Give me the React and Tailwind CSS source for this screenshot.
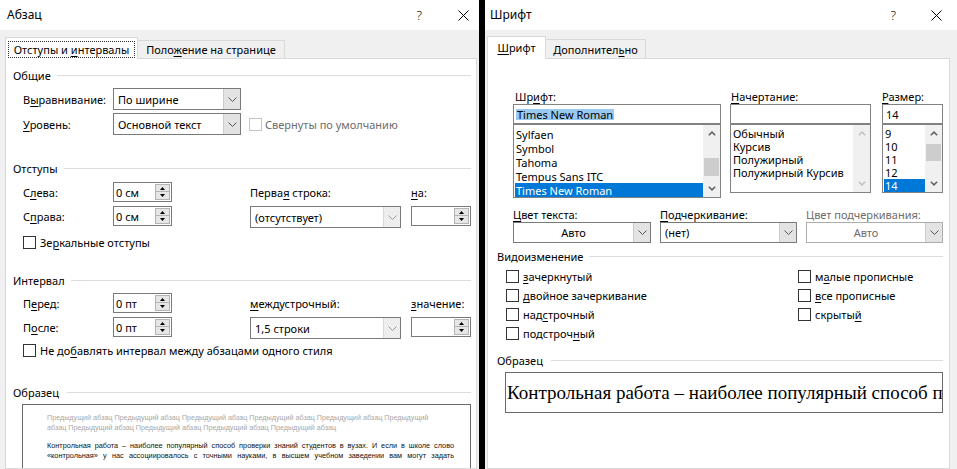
import React from "react";

const U = ({ children }) => (
  <span className="underline underline-offset-[2px] decoration-[1px]">{children}</span>
);

const CloseX = () => (
  <svg width="11" height="11" viewBox="0 0 11 11">
    <path d="M0.5 0.5L10.5 10.5M10.5 0.5L0.5 10.5" stroke="#000" strokeWidth="1" fill="none" />
  </svg>
);

const ChevDown = ({ color = "#5a5a5a" }) => (
  <svg width="9" height="5" viewBox="0 0 9 5">
    <path d="M0.5 0.5L4.5 4.5L8.5 0.5" fill="none" stroke={color} strokeWidth="1" />
  </svg>
);

const ScrollUp = ({ color = "#606060" }) => (
  <svg width="8" height="5" viewBox="0 0 8 5">
    <path d="M0.8 4.3L4 1.1L7.2 4.3" fill="none" stroke={color} strokeWidth="1.5" />
  </svg>
);

const ScrollDown = ({ color = "#606060" }) => (
  <svg width="8" height="5" viewBox="0 0 8 5">
    <path d="M0.8 0.7L4 3.9L7.2 0.7" fill="none" stroke={color} strokeWidth="1.5" />
  </svg>
);

function Box({ disabled }) {
  return (
    <div
      className={`w-[13px] h-[13px] shrink-0 border bg-white ${
        disabled ? "border-[#c4c4c4]" : "border-[#333333]"
      }`}
    />
  );
}

function Spin({ value, className = "" }) {
  return (
    <div className={`flex h-[20px] border border-[#7a7a7a] bg-white ${className}`}>
      <div className="flex-1 flex items-center pl-[2px]">
        <span>{value}</span>
      </div>
      <div className="w-[16px] flex flex-col py-px pr-px">
        <div className="h-[9px] bg-[#e6e6e6] border border-[#b4b4b4] flex items-center justify-center">
          <svg width="5" height="3" viewBox="0 0 5 3">
            <path d="M0 3L2.5 0L5 3Z" fill="#000" />
          </svg>
        </div>
        <div className="h-[9px] bg-[#e6e6e6] border border-[#b4b4b4] border-t-0 flex items-center justify-center">
          <svg width="5" height="3" viewBox="0 0 5 3">
            <path d="M0 0L2.5 3L5 0Z" fill="#000" />
          </svg>
        </div>
      </div>
    </div>
  );
}

function Select({ value, className = "", center, disabled, light }) {
  return (
    <div
      className={`flex border bg-white ${
        disabled ? "border-[#adadad]" : "border-[#7a7a7a]"
      } ${className}`}
    >
      <div
        className={`flex-1 flex items-center ${center ? "justify-center" : "pl-[4px]"} ${
          disabled ? "text-[#6d6d6d]" : ""
        }`}
      >
        <span>{value}</span>
      </div>
      <div
        className={`w-[17px] flex items-center justify-center border-l ${
          light ? "bg-[#eeeeee] border-[#dadada]" : "bg-[#e3e3e3] border-[#cccccc]"
        }`}
      >
        <ChevDown color={light ? "#9a9a9a" : "#555555"} />
      </div>
    </div>
  );
}

function Group({ label, className = "", gap = "ml-[6px]" }) {
  return (
    <div className={`flex items-center h-[16px] ${className}`}>
      <span>{label}</span>
      <div className={`flex-1 h-px bg-[#dcdcdc] ${gap}`} />
    </div>
  );
}

function TitleBar({ title, pl, qGap, pr }) {
  return (
    <div className={`h-[30px] shrink-0 bg-white flex items-center ${pl}`}>
      <span className="text-[12px]">{title}</span>
      <div className={`ml-auto flex items-center ${pr}`}>
        <span className="text-[13px] font-light">?</span>
        <div className={qGap}>
          <CloseX />
        </div>
      </div>
    </div>
  );
}

function LeftDialog() {
  return (
    <div className="w-[479px] h-[469px] shrink-0 bg-[#f0f0f0] flex flex-col overflow-hidden">
      <TitleBar title="Абзац" pl="pl-[7px]" qGap="ml-[36px]" pr="mr-[10px]" />
      <div className="h-[28px] shrink-0 pl-[5px] flex items-end">
        <div className="relative z-10 -mb-px h-[22px] w-[133px] bg-white border border-b-0 border-[#d9d9d9] px-[2px] pt-[3px] pb-[1px]">
          <div className="h-full border border-dotted border-[#333] flex items-center justify-center">
            <span>
              Отступы и <U>и</U>нтервалы
            </span>
          </div>
        </div>
        <div className="-ml-px h-[18px] w-[148px] border border-b-0 border-[#d9d9d9] bg-[#f0f0f0] flex items-center justify-center">
          <span>
            Поло<U>ж</U>ение на странице
          </span>
        </div>
      </div>
      <div className="ml-[5px] w-[472px] flex-1 bg-white border border-[#d9d9d9] pl-[7px] pr-[5px] overflow-hidden">
        <Group label="Общие" className="mt-[8px]" />
        <div className="ml-[10px] mt-[5px] flex items-center h-[22px]">
          <div className="w-[90px]">
            В<U>ы</U>равнивание:
          </div>
          <Select value="По ширине" className="w-[128px] h-[22px]" />
        </div>
        <div className="ml-[10px] mt-[3px] flex items-center h-[22px]">
          <div className="w-[90px]">
            <U>У</U>ровень:
          </div>
          <Select value="Основной текст" className="w-[128px] h-[22px]" />
          <div className="ml-[8px] flex items-center">
            <Box disabled />
            <span className="ml-[3px] text-[#6d6d6d]">Свернуты по умолчанию</span>
          </div>
        </div>

        <Group label="Отступы" className="mt-[25px]" />
        <div className="ml-[10px] mt-[6px] flex items-center h-[20px]">
          <div className="w-[90px]">
            С<U>л</U>ева:
          </div>
          <Spin value="0 см" className="w-[59px]" />
          <div className="ml-[78px] w-[161px]">
            Перва<U>я</U> строка:
          </div>
          <div>
            <U>н</U>а:
          </div>
        </div>
        <div className="ml-[10px] mt-[4px] flex items-start h-[22px]">
          <div className="w-[90px] h-[20px] flex items-center">
            <span>
              С<U>п</U>рава:
            </span>
          </div>
          <Spin value="0 см" className="w-[59px]" />
          <Select value="(отсутствует)" className="ml-[78px] w-[151px] h-[22px]" light />
          <Spin value="" className="ml-[10px] w-[60px]" />
        </div>
        <div className="ml-[10px] mt-[8px] flex items-center h-[13px]">
          <Box />
          <span className="ml-[4px]">
            Зе<U>р</U>кальные отступы
          </span>
        </div>

        <Group label="Интервал" className="mt-[23px]" />
        <div className="ml-[10px] mt-[5px] flex items-center h-[20px]">
          <div className="w-[90px]">
            П<U>е</U>ред:
          </div>
          <Spin value="0 пт" className="w-[59px]" />
          <div className="ml-[78px] w-[161px]">
            <U>м</U>еждустрочный:
          </div>
          <div>
            <U>з</U>начение:
          </div>
        </div>
        <div className="ml-[10px] mt-[4px] flex items-start h-[22px]">
          <div className="w-[90px] h-[20px] flex items-center">
            <span>
              П<U>о</U>сле:
            </span>
          </div>
          <Spin value="0 пт" className="w-[59px]" />
          <Select value="1,5 строки" className="ml-[78px] w-[151px] h-[22px]" light />
          <Spin value="" className="ml-[10px] w-[60px]" />
        </div>
        <div className="ml-[10px] mt-[5px] flex items-center h-[13px]">
          <Box />
          <span className="ml-[4px]">
            Не до<U>б</U>авлять интервал между абзацами одного стиля
          </span>
        </div>

        <Group label="Образец" className="mt-[27px]" gap="ml-[8px]" />
        <div className="ml-[9px] mt-[4px] w-[449px] h-[80px] border border-[#6a6a6a] bg-white pl-[24px] pr-[16px] pt-[8px] font-['Liberation_Sans',sans-serif]">
          <div className="text-[#a8a8a8] text-[7.2px] leading-[10px] whitespace-nowrap">
            Предыдущий абзац Предыдущий абзац Предыдущий абзац Предыдущий абзац Предыдущий абзац Предыдущий
          </div>
          <div className="text-[#a8a8a8] text-[7.2px] leading-[10px] whitespace-nowrap">
            абзац Предыдущий абзац Предыдущий абзац Предыдущий абзац Предыдущий абзац
          </div>
          <div className="mt-[8px] text-[7.3px] leading-[10px] text-[#111] text-justify [text-align-last:justify] whitespace-nowrap">
            Контрольная работа – наиболее популярный способ проверки знаний студентов в вузах. И если в школе слово
          </div>
          <div className="text-[7.3px] leading-[10px] text-[#111] text-justify [text-align-last:justify]">
            «контрольная» у нас ассоциировалось с точными науками, в высшем учебном заведении вам могут задать
          </div>
        </div>
      </div>
    </div>
  );
}

function ListBox({ items, selected, className, itemH, itemsClass, scroll }) {
  return (
    <div className={`flex border border-[#828282] bg-white ${className}`}>
      <div className={`flex-1 flex flex-col pt-[2px] pl-px ${itemsClass}`}>
        {items.map((it) => (
          <div
            key={it}
            className={`${itemH} flex items-center pl-[1px] ${
              it === selected ? "bg-[#0078d7] text-white" : ""
            }`}
          >
            <span>{it}</span>
          </div>
        ))}
      </div>
      {scroll}
    </div>
  );
}

function CheckRow({ children }) {
  return (
    <div className="h-[19px] flex items-center">
      <Box />
      <span className="ml-[4px]">{children}</span>
    </div>
  );
}

function RightDialog() {
  return (
    <div className="w-[472px] h-[469px] shrink-0 bg-[#f0f0f0] flex flex-col overflow-hidden">
      <TitleBar title="Шрифт" pl="pl-[5px]" qGap="ml-[35px]" pr="mr-[15px]" />
      <div className="h-[28px] shrink-0 pl-[2px] flex items-end">
        <div className="relative z-10 -mb-px h-[23px] w-[59px] bg-white border border-b-0 border-[#d9d9d9] flex items-center justify-center pb-[1px]">
          <span>
            <U>Ш</U>рифт
          </span>
        </div>
        <div className="-ml-px h-[19px] w-[101px] border border-b-0 border-[#d9d9d9] bg-[#f0f0f0] flex items-center justify-center">
          <span>
            Дополнител<U>ь</U>но
          </span>
        </div>
      </div>
      <div className="ml-[2px] w-[463px] h-[411px] shrink-0 bg-white border border-[#d9d9d9] overflow-hidden">
        <div className="flex pl-[25px] mt-[30px]">
          <div className="w-[208px]">
            <div className="h-[14px] flex items-center pl-[2px]">
              <span>
                Шр<U>и</U>фт:
              </span>
            </div>
            <div className="mt-px h-[20px] border border-[#828282] flex items-center pl-[2px]">
              <span className="bg-[#99c9ef] px-px">Times New Roman</span>
            </div>
            <ListBox
              className="h-[74px]"
              itemH="h-[14px]"
              items={["Sylfaen", "Symbol", "Tahoma", "Tempus Sans ITC", "Times New Roman"]}
              selected="Times New Roman"
              itemsClass=""
              scroll={
                <div className="w-[17px] bg-[#f0f0f0] flex flex-col items-center">
                  <div className="h-[17px] flex items-center justify-center">
                    <ScrollUp />
                  </div>
                  <div className="mt-[16px] w-[15px] h-[18px] bg-[#cdcdcd]" />
                  <div className="mt-auto h-[17px] flex items-center justify-center">
                    <ScrollDown />
                  </div>
                </div>
              }
            />
          </div>
          <div className="ml-[9px] w-[141px]">
            <div className="h-[14px] flex items-center pl-px">
              <span>
                <U>Н</U>ачертание:
              </span>
            </div>
            <div className="mt-px h-[20px] border border-[#828282]" />
            <ListBox
              className="h-[69px]"
              itemH="h-[13px]"
              items={["Обычный", "Курсив", "Полужирный", "Полужирный Курсив"]}
              selected=""
              itemsClass="pl-[3px]"
              scroll={
                <div className="w-[17px] bg-[#f0f0f0] flex flex-col items-center">
                  <div className="h-[17px] flex items-center justify-center">
                    <ScrollUp color="#c2c2c2" />
                  </div>
                  <div className="mt-auto h-[17px] flex items-center justify-center">
                    <ScrollDown color="#c2c2c2" />
                  </div>
                </div>
              }
            />
          </div>
          <div className="ml-[11px] w-[61px]">
            <div className="h-[14px] flex items-center">
              <span>
                <U>Р</U>азмер:
              </span>
            </div>
            <div className="mt-px h-[20px] border border-[#828282] flex items-center pl-[3px]">
              <span>14</span>
            </div>
            <ListBox
              className="h-[69px]"
              itemH="h-[13px]"
              items={["9", "10", "11", "12", "14"]}
              selected="14"
              itemsClass="pl-0"
              scroll={
                <div className="w-[17px] bg-[#f0f0f0] flex flex-col items-center">
                  <div className="h-[17px] flex items-center justify-center">
                    <ScrollUp />
                  </div>
                  <div className="mt-[2px] w-[15px] h-[17px] bg-[#cdcdcd]" />
                  <div className="mt-auto h-[17px] flex items-center justify-center">
                    <ScrollDown />
                  </div>
                </div>
              }
            />
          </div>
        </div>

        <div className="flex pl-[25px] mt-[9px]">
          <div className="w-[138px]">
            <div className="h-[14px] flex items-center">
              <span>
                <U>Ц</U>вет текста:
              </span>
            </div>
            <Select value="Авто" center className="mt-px h-[21px]" />
          </div>
          <div className="ml-[9px] w-[137px]">
            <div className="h-[14px] flex items-center">
              <span>
                <U>П</U>одчеркивание:
              </span>
            </div>
            <Select value="(нет)" className="mt-px h-[21px]" />
          </div>
          <div className="ml-[9px] w-[137px]">
            <div className="h-[14px] flex items-center text-[#6d6d6d]">
              <span>Цвет подчеркивания:</span>
            </div>
            <Select value="Авто" center disabled className="mt-px h-[21px]" />
          </div>
        </div>

        <Group label="Видоизменение" className="mt-[5px] ml-[9px] mr-[6px]" gap="ml-[6px]" />
        <div className="flex mt-[3px] ml-[18px]">
          <div className="w-[292px] flex flex-col">
            <CheckRow>
              <U>з</U>ачеркнутый
            </CheckRow>
            <CheckRow>
              <U>д</U>войное зачеркивание
            </CheckRow>
            <CheckRow>
              над<U>с</U>трочный
            </CheckRow>
            <CheckRow>
              подстроч<U>н</U>ый
            </CheckRow>
          </div>
          <div className="flex flex-col">
            <CheckRow>
              м<U>а</U>лые прописные
            </CheckRow>
            <CheckRow>
              <U>в</U>се прописные
            </CheckRow>
            <CheckRow>
              скрыты<U>й</U>
            </CheckRow>
          </div>
        </div>

        <Group label="Образец" className="mt-[9px] ml-[9px] mr-[6px]" gap="ml-[8px]" />
        <div className="mt-[4px] ml-[17px] w-[438px] h-[41px] border border-[#6a6a6a] bg-white flex items-center pl-px overflow-hidden whitespace-nowrap font-['Liberation_Serif',serif] text-[19px] text-black">
          <span>Контрольная работа – наиболее популярный способ проверки</span>
        </div>
      </div>
    </div>
  );
}

export default function App() {
  return (
    <div className="flex w-[957px] h-[469px] overflow-hidden bg-black font-['Noto_Sans',sans-serif] text-[11px] leading-none text-black">
      <LeftDialog />
      <div className="w-[6px] shrink-0 bg-black" />
      <RightDialog />
    </div>
  );
}
